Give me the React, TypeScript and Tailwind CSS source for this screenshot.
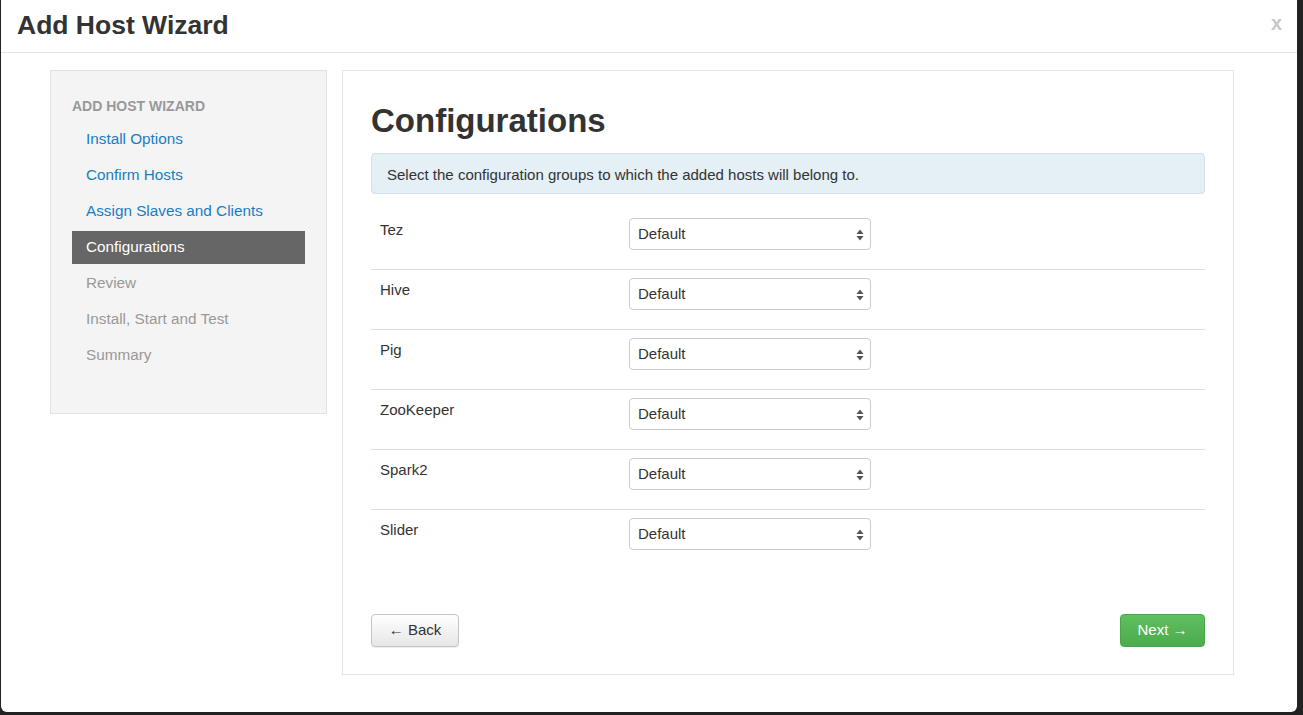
import React from 'react';

const steps = [
  { label: 'Install Options', state: 'done' },
  { label: 'Confirm Hosts', state: 'done' },
  { label: 'Assign Slaves and Clients', state: 'done' },
  { label: 'Configurations', state: 'active' },
  { label: 'Review', state: 'todo' },
  { label: 'Install, Start and Test', state: 'todo' },
  { label: 'Summary', state: 'todo' },
];

const services = ['Tez', 'Hive', 'Pig', 'ZooKeeper', 'Spark2', 'Slider'];

const SelectArrows: React.FC = () => (
  <svg width="8" height="12" viewBox="0 0 8 12" className="absolute right-[6px] top-[10px]">
    <path d="M4 0.5 L7.5 5 L0.5 5 Z" fill="#555" />
    <path d="M4 11.5 L7.5 7 L0.5 7 Z" fill="#555" />
  </svg>
);

const ConfigRow: React.FC<{ name: string; last: boolean }> = ({ name, last }) => (
  <div className={`flex h-[60px] ${last ? '' : 'border-b border-[#dddddd]'}`}>
    <div className="w-[258px] pl-[9px] pt-[10px] leading-[20px] text-[15px] text-[#333]">{name}</div>
    <div className="pt-[8px]">
      <div className="relative w-[242px] h-[32px] border border-[#cccccc] rounded-[4px] bg-white pl-[8px] pt-[1px] flex items-center text-[15px] text-[#333]">
        Default
        <SelectArrows />
      </div>
    </div>
  </div>
);

export default function App() {
  return (
    <div className="w-[1303px] h-[715px] bg-[#222222] overflow-hidden" style={{ fontFamily: '"Liberation Sans", Arial, sans-serif' }}>
      <div className="ml-[1px] w-[1296px] h-[712px] bg-white rounded-b-[6px] flex flex-col">
        {/* Header */}
        <div className="h-[53px] border-b border-[#e5e5e5] flex items-center justify-between pl-[16px] pr-[15px] shrink-0">
          <h1 className="text-[26.5px] font-bold text-[#333] leading-none mt-[-1px]">Add Host Wizard</h1>
          <span className="text-[20px] font-bold text-[#c8c8c8] leading-none mt-[-6px]">x</span>
        </div>

        {/* Body */}
        <div className="flex gap-[15px] pl-[49px] pt-[17px]">
          {/* Sidebar */}
          <div className="w-[277px] h-[344px] bg-[#f4f4f4] border border-[#e3e3e3] pl-[21px] pr-[21px] pt-[25px]">
            <div className="text-[14px] font-bold text-[#999] leading-[20px] mb-[7px] uppercase">Add Host Wizard</div>
            {steps.map((s) => (
              <div
                key={s.label}
                className={`h-[33px] mb-[3px] pl-[14px] flex items-center text-[15.3px] ${
                  s.state === 'active'
                    ? 'bg-[#666666] text-white'
                    : s.state === 'done'
                    ? 'text-[#1a7dc4]'
                    : 'text-[#999999]'
                }`}
              >
                {s.label}
              </div>
            ))}
          </div>

          {/* Main panel */}
          <div className="w-[892px] h-[605px] border border-[#e3e3e3] bg-white pl-[28px] pr-[28px] pt-[31px] flex flex-col">
            <h2 className="text-[33px] font-bold text-[#333] leading-[37px] mb-[14px]">Configurations</h2>
            <div className="h-[41px] bg-[#e4eff6] border border-[#d3e2ec] rounded-[4px] pl-[15px] pt-[3px] flex items-center text-[15px] text-[#333]">
              Select the configuration groups to which the added hosts will belong to.
            </div>
            <div className="mt-[16px]">
              {services.map((s, i) => (
                <ConfigRow key={s} name={s} last={i === services.length - 1} />
              ))}
            </div>
            <div className="mt-[44px] flex justify-between">
              <button className="w-[88px] h-[33px] rounded-[4px] border border-[#c5c5c5] bg-gradient-to-b from-white to-[#e6e6e6] text-[15px] text-[#333] shadow-[0_1px_1px_rgba(0,0,0,0.08)]">
                ← Back
              </button>
              <button className="w-[85px] h-[33px] rounded-[4px] border border-[#4aa54a] bg-gradient-to-b from-[#5fc05f] to-[#4cab4c] text-[15px] text-white">
                Next →
              </button>
            </div>
          </div>
        </div>
      </div>
    </div>
  );
}
